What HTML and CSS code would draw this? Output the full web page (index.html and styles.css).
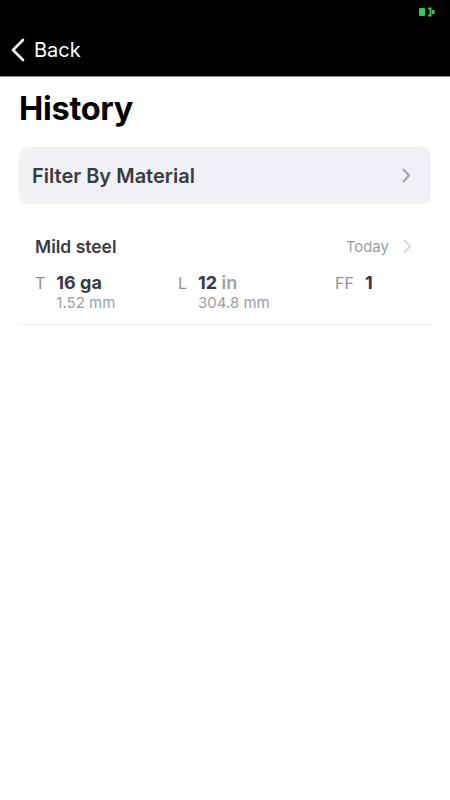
FILE: index.html
```html
<!DOCTYPE html>
<html lang="en">
<head>
  <meta charset="UTF-8">
  <title>History</title>
  <link rel="stylesheet" href="styles.css">
</head>
<body>
  <div class="topbar">
    <div class="status">
      <svg class="battery" width="18" height="10" viewBox="0 0 18 10">
        <rect x="1" y="1" width="6" height="8" rx="1" fill="#34c759"/>
        <path d="M10 1.5 L12.5 1.5 L12.5 8.5 L10 8.5" fill="none" stroke="#34c759" stroke-width="2"/>
        <rect x="14" y="3" width="2.5" height="4" fill="#34c759"/>
      </svg>
    </div>
    <div class="nav">
      <svg class="back-icon" width="14" height="24" viewBox="0 0 14 24">
        <path d="M12 2 L2 12 L12 22" fill="none" stroke="#fff" stroke-width="2.6" stroke-linecap="round" stroke-linejoin="round"/>
      </svg>
      <span class="back-text">Back</span>
    </div>
  </div>

  <div class="content">
    <h1 class="title">History</h1>

    <div class="filter">
      <span>Filter By Material</span>
      <svg width="9" height="15" viewBox="0 0 9 15">
        <path d="M1.5 1.5 L7 7.5 L1.5 13.5" fill="none" stroke="#a0a3aa" stroke-width="2" stroke-linecap="round" stroke-linejoin="round"/>
      </svg>
    </div>

    <div class="entry">
      <div class="entry-head">
        <span class="material">Mild steel</span>
        <span class="date">Today</span>
        <svg width="9" height="15" viewBox="0 0 9 15">
          <path d="M1.5 1.5 L7 7.5 L1.5 13.5" fill="none" stroke="#d0d2d6" stroke-width="1.8" stroke-linecap="round" stroke-linejoin="round"/>
        </svg>
      </div>
      <div class="entry-values">
        <div class="value value-t">
          <span class="label">T</span>
          <div>
            <div class="main">16 ga</div>
            <div class="sub">1.52 mm</div>
          </div>
        </div>
        <div class="value value-l">
          <span class="label">L</span>
          <div>
            <div class="main">12 <span class="unit">in</span></div>
            <div class="sub">304.8 mm</div>
          </div>
        </div>
        <div class="value value-ff">
          <span class="label">FF</span>
          <div>
            <div class="main">1</div>
          </div>
        </div>
      </div>
    </div>
  </div>
</body>
</html>
```

FILE: styles.css
```css
body {
  margin: 0;
  font-family: Inter, "Noto Sans", sans-serif;
  background: #fff;
  color: #000;
}
.topbar {
  background: #000;
  height: 76px;
  border-bottom: 1px solid #8e8e8e;
}
.status {
  height: 30px;
  display: flex;
  justify-content: flex-end;
  align-items: flex-start;
  padding: 7px 14px 0 0;
  box-sizing: border-box;
}
.nav {
  display: flex;
  align-items: center;
  padding-left: 11px;
  height: 40px;
}
.back-icon {
  margin-right: 9px;
}
.back-text {
  color: #fff;
  font-size: 20px;
}
.content {
  padding: 0 19px;
}
.title {
  font-size: 32.5px;
  font-weight: 700;
  margin: 14px 0 20px;
  line-height: 36px;
  letter-spacing: -0.3px;
}
.filter {
  background: #eff1f4;
  border-radius: 9px;
  height: 57px;
  display: flex;
  align-items: center;
  justify-content: space-between;
  padding: 0 20px 0 13px;
  font-size: 20px;
  font-weight: 600;
  color: #3a3a44;
}
.entry {
  padding: 32px 19px 12px 16px;
  border-bottom: 1px solid #eceef0;
}
.entry-head {
  display: flex;
  align-items: center;
}
.material {
  flex: 1;
  font-size: 17.5px;
  font-weight: 600;
  color: #3a3a44;
}
.date {
  font-size: 15px;
  color: #9c9ea4;
  margin-right: 14px;
}
.entry-values {
  display: flex;
  margin-top: 15px;
}
.value {
  display: flex;
  gap: 11px;
}
.value-t {
  width: 143px;
}
.value-l {
  width: 157px;
}
.label {
  font-size: 16px;
  color: #8e9096;
  line-height: 22px;
}
.main {
  font-size: 18px;
  font-weight: 700;
  color: #3a3a44;
  line-height: 22px;
}
.unit {
  color: #9c9ea4;
  font-weight: 600;
}
.sub {
  font-size: 15px;
  color: #9c9ea4;
  line-height: 18px;
}
```
